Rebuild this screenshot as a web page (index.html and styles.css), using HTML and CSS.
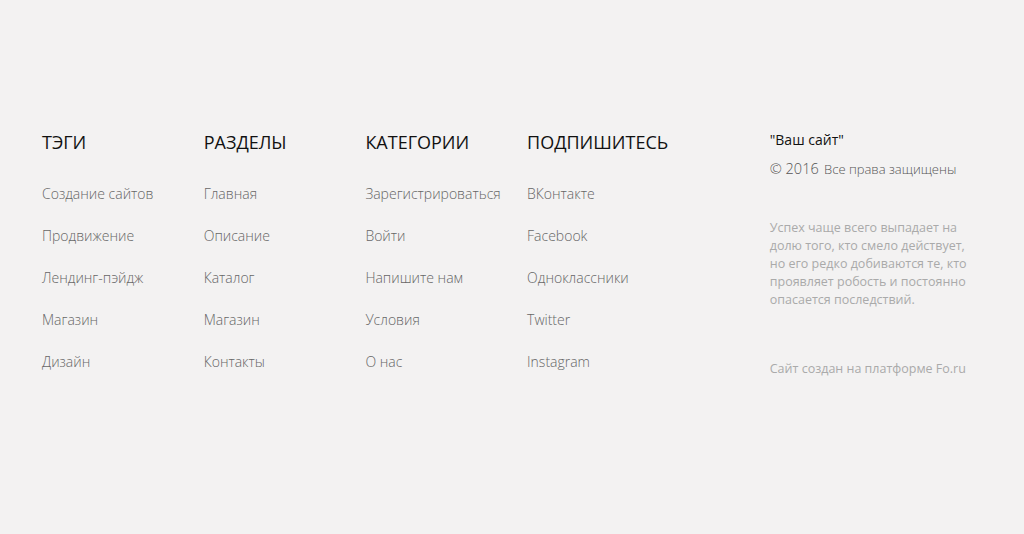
FILE: index.html
```html
<!DOCTYPE html>
<html lang="ru">
<head>
  <meta charset="UTF-8">
  <meta name="viewport" content="width=device-width, initial-scale=1.0">
  <title>Ваш сайт</title>
  <link rel="stylesheet" href="styles.css">
</head>
<body>
  <footer class="footer">

    <div class="col">
      <h3>ТЭГИ</h3>
      <ul>
        <li><a href="#">Создание сайтов</a></li>
        <li><a href="#">Продвижение</a></li>
        <li><a href="#">Лендинг-пэйдж</a></li>
        <li><a href="#">Магазин</a></li>
        <li><a href="#">Дизайн</a></li>
      </ul>
    </div>

    <div class="col">
      <h3>РАЗДЕЛЫ</h3>
      <ul>
        <li><a href="#">Главная</a></li>
        <li><a href="#">Описание</a></li>
        <li><a href="#">Каталог</a></li>
        <li><a href="#">Магазин</a></li>
        <li><a href="#">Контакты</a></li>
      </ul>
    </div>

    <div class="col">
      <h3>КАТЕГОРИИ</h3>
      <ul>
        <li><a href="#">Зарегистрироваться</a></li>
        <li><a href="#">Войти</a></li>
        <li><a href="#">Напишите нам</a></li>
        <li><a href="#">Условия</a></li>
        <li><a href="#">О нас</a></li>
      </ul>
    </div>

    <div class="col">
      <h3>ПОДПИШИТЕСЬ</h3>
      <ul>
        <li><a href="#">ВКонтакте</a></li>
        <li><a href="#">Facebook</a></li>
        <li><a href="#">Одноклассники</a></li>
        <li><a href="#">Twitter</a></li>
        <li><a href="#">Instagram</a></li>
      </ul>
    </div>

    <div class="about">
      <div class="site-name">"Ваш сайт"</div>
      <div class="copy"><span class="year">© 2016</span> Все права защищены</div>
      <p class="quote">Успех чаще всего выпадает на долю того, кто смело действует, но его редко добиваются те, кто проявляет робость и постоянно опасается последствий.</p>
      <div class="made">Сайт создан на платформе Fo.ru</div>
    </div>

  </footer>
</body>
</html>
```

FILE: styles.css
```css
body{
  margin: 0;
  padding: 0;
  background-color: #f3f2f2;
  font-family: "Open Sans", "Noto Sans", sans-serif;
}

.footer{
  display: flex;
  padding: 130px 0 0 42px;
}

.col{
  width: 161.7px;
}

.col h3{
  margin: 0;
  font-size: 18px;
  line-height: 24px;
  font-weight: 400;
  color: #111;
}

.col ul{
  list-style: none;
  margin: 0;
  padding: 0;
  padding-top: 30px;
}

.col li{
  font-size: 14px;
  line-height: 20px;
  margin-bottom: 22px;
}

.col a{
  text-decoration: none;
  font-weight: 300;
  color: #666;
}

.about{
  margin-left: 81px;
  width: 210px;
}

.site-name{
  font-size: 14px;
  line-height: 20px;
  color: #111;
}

.copy{
  margin-top: 9px;
  font-size: 13px;
  font-weight: 300;
  color: #555;
}

.copy .year{
  font-size: 14.5px;
  margin-right: 2px;
}

.quote{
  margin: 41px 0 0;
  font-size: 12.5px;
  line-height: 18px;
  color: #aaa;
}

.made{
  margin-top: 51px;
  font-size: 12.5px;
  color: #aaa;
}
```
